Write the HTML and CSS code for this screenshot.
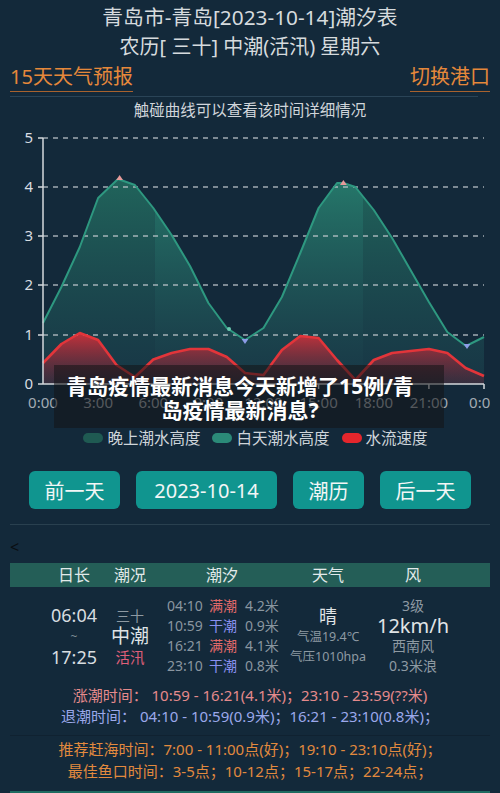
FILE: index.html
```html
<!DOCTYPE html>
<html lang="zh-CN">
<head>
  <meta charset="UTF-8">
  <meta name="viewport" content="width=device-width, initial-scale=1.0">
  <title>青岛潮汐表</title>
  <link rel="stylesheet" href="styles.css">
</head>
<body>
  <div class="title">
    <div class="title-main">青岛市-青岛[2023-10-14]潮汐表</div>
    <div>农历[ 三十] 中潮(活汛) 星期六</div>
  </div>

  <div class="nav">
    <a class="nav-link">15天天气预报</a>
    <a class="nav-link">切换港口</a>
  </div>
  <div class="rule"></div>

  <div class="hint">触碰曲线可以查看该时间详细情况</div>

  <div class="chart">
    <svg class="chart-svg" width="480" height="300" viewBox="10 121 480 300">
      <defs>
        <linearGradient id="gDay" x1="0" y1="178" x2="0" y2="384" gradientUnits="userSpaceOnUse">
          <stop offset="0" stop-color="#2a8c76" stop-opacity="0.8"/>
          <stop offset="1" stop-color="#1e4652" stop-opacity="0.5"/>
        </linearGradient>
        <linearGradient id="gNight" x1="0" y1="178" x2="0" y2="384" gradientUnits="userSpaceOnUse">
          <stop offset="0" stop-color="#257866" stop-opacity="0.75"/>
          <stop offset="1" stop-color="#1c4350" stop-opacity="0.5"/>
        </linearGradient>
        <linearGradient id="gRed" x1="0" y1="333" x2="0" y2="384" gradientUnits="userSpaceOnUse">
          <stop offset="0" stop-color="#d8303a" stop-opacity="0.9"/>
          <stop offset="1" stop-color="#6a2234" stop-opacity="0.35"/>
        </linearGradient>
        <clipPath id="cDay"><rect x="154.5" y="120" width="208.5" height="270"/></clipPath>
        <clipPath id="cNight">
          <rect x="40" y="120" width="114.5" height="270"/>
          <rect x="363" y="120" width="130" height="270"/>
        </clipPath>
      </defs>

      <!-- tide area, day and night -->
      <path clip-path="url(#cNight)" fill="url(#gNight)" d="M43,384 L43,323 L61.4,287 L79.8,247 L98.1,198 L118,179 L134.9,185 L153.3,208 L171.6,235 L190,266 L208.4,303 L226.8,328 L245,340 L263.5,328 L281.9,297 L300.3,253 L318.6,208 L337,183 L343.4,183 L355.4,187 L373.8,210 L392.1,238 L410.5,270 L428.9,302 L447.3,332 L466,346 L484,337 L484,384 Z"/>
      <path clip-path="url(#cDay)" fill="url(#gDay)" d="M43,384 L43,323 L61.4,287 L79.8,247 L98.1,198 L118,179 L134.9,185 L153.3,208 L171.6,235 L190,266 L208.4,303 L226.8,328 L245,340 L263.5,328 L281.9,297 L300.3,253 L318.6,208 L337,183 L343.4,183 L355.4,187 L373.8,210 L392.1,238 L410.5,270 L428.9,302 L447.3,332 L466,346 L484,337 L484,384 Z"/>

      <!-- flow speed area -->
      <path fill="url(#gRed)" d="M43,384 L43,363 L61.4,344 L79.8,333 L98.1,340 L116.5,365 L134.9,377 L153.3,359.5 L171.6,353 L190,349 L208.4,349 L226.8,357 L245.1,373 L263.5,375 L281.9,350 L300.3,336 L318.6,338 L337,360 L355.4,380 L373.8,360 L392.1,353 L410.5,351 L428.9,349 L447.3,353 L465.6,368 L484,376 L484,384 Z"/>

      <!-- grid -->
      <g class="grid">
        <line x1="43" y1="138" x2="484" y2="138"/>
        <line x1="43" y1="187" x2="484" y2="187"/>
        <line x1="43" y1="236" x2="484" y2="236"/>
        <line x1="43" y1="285" x2="484" y2="285"/>
        <line x1="43" y1="335" x2="484" y2="335"/>
      </g>

      <!-- lines -->
      <polyline class="tide-line" points="43,323 61.4,287 79.8,247 98.1,198 118,179 134.9,185 153.3,208 171.6,235 190,266 208.4,303 226.8,328 245,340 263.5,328 281.9,297 300.3,253 318.6,208 337,183 343.4,183 355.4,187 373.8,210 392.1,238 410.5,270 428.9,302 447.3,332 466,346 484,337"/>
      <polyline class="flow-line" points="43,363 61.4,344 79.8,333 98.1,340 116.5,365 134.9,377 153.3,359.5 171.6,353 190,349 208.4,349 226.8,357 245.1,373 263.5,375 281.9,350 300.3,336 318.6,338 337,360 355.4,380 373.8,360 392.1,353 410.5,351 428.9,349 447.3,353 465.6,368 484,376"/>

      <!-- high / low markers -->
      <path class="mark-high" d="M119.6,175 L123,180 L116.2,180 Z"/>
      <path class="mark-high" d="M343.4,180 L346.8,185 L340,185 Z"/>
      <path class="mark-low" d="M245,344 L248.4,339 L241.6,339 Z"/>
      <path class="mark-low" d="M467,349 L470.4,344 L463.6,344 Z"/>
      <circle cx="229" cy="329" r="2" fill="#6cc8b0"/>

      <!-- axes -->
      <g class="axis">
        <line x1="43" y1="138" x2="43" y2="384"/>
        <line x1="43" y1="384" x2="484" y2="384"/>
        <line x1="38" y1="138" x2="43" y2="138"/>
        <line x1="38" y1="187" x2="43" y2="187"/>
        <line x1="38" y1="236" x2="43" y2="236"/>
        <line x1="38" y1="285" x2="43" y2="285"/>
        <line x1="38" y1="335" x2="43" y2="335"/>
        <line x1="38" y1="384" x2="43" y2="384"/>
        <line x1="98.1" y1="384" x2="98.1" y2="389"/>
        <line x1="153.3" y1="384" x2="153.3" y2="389"/>
        <line x1="208.4" y1="384" x2="208.4" y2="389"/>
        <line x1="263.5" y1="384" x2="263.5" y2="389"/>
        <line x1="318.6" y1="384" x2="318.6" y2="389"/>
        <line x1="373.8" y1="384" x2="373.8" y2="389"/>
        <line x1="428.9" y1="384" x2="428.9" y2="389"/>
        <line x1="484" y1="384" x2="484" y2="389"/>
      </g>
      <g class="y-labels">
        <text x="33" y="143">5</text>
        <text x="33" y="192">4</text>
        <text x="33" y="241">3</text>
        <text x="33" y="290">2</text>
        <text x="33" y="340">1</text>
        <text x="33" y="389">0</text>
      </g>
      <g class="x-labels">
        <text x="43" y="408">0:00</text>
        <text x="98.1" y="408">3:00</text>
        <text x="153.3" y="408">6:00</text>
        <text x="208.4" y="408">9:00</text>
        <text x="263.5" y="408">12:00</text>
        <text x="318.6" y="408">15:00</text>
        <text x="373.8" y="408">18:00</text>
        <text x="428.9" y="408">21:00</text>
        <text x="484" y="408">0:00</text>
      </g>
    </svg>

    <div class="news">青岛疫情最新消息今天新增了15例/青<br>岛疫情最新消息?</div>
  </div>

  <div class="legend">
    <span class="legend-item"><i class="dot dot-night"></i>晚上潮水高度</span>
    <span class="legend-item"><i class="dot dot-day"></i>白天潮水高度</span>
    <span class="legend-item"><i class="dot dot-flow"></i>水流速度</span>
  </div>

  <div class="buttons">
    <button class="btn btn-day">前一天</button>
    <button class="btn btn-date">2023-10-14</button>
    <button class="btn btn-cal">潮历</button>
    <button class="btn btn-day">后一天</button>
  </div>
  <div class="divider"></div>

  <div class="back">&lt;</div>

  <div class="table">
    <div class="table-head">
      <div>日长</div>
      <div>潮况</div>
      <div>潮汐</div>
      <div>天气</div>
      <div>风</div>
    </div>
    <div class="table-body">
      <div class="cell sun">
        <div class="big">06:04</div>
        <div class="tilde">~</div>
        <div class="big">17:25</div>
      </div>
      <div class="cell state">
        <div class="muted">三十</div>
        <div class="state-main">中潮</div>
        <div class="state-sub">活汛</div>
      </div>
      <div class="cell tides">
        <div class="tide-row"><span>04:10</span><span class="high">满潮</span><span>4.2米</span></div>
        <div class="tide-row"><span>10:59</span><span class="low">干潮</span><span>0.9米</span></div>
        <div class="tide-row"><span>16:21</span><span class="high">满潮</span><span>4.1米</span></div>
        <div class="tide-row"><span>23:10</span><span class="low">干潮</span><span>0.8米</span></div>
      </div>
      <div class="cell weather">
        <div class="weather-main">晴</div>
        <div class="small">气温19.4℃</div>
        <div class="small">气压1010hpa</div>
      </div>
      <div class="cell wind">
        <div class="muted">3级</div>
        <div class="wind-speed">12km/h</div>
        <div class="muted">西南风</div>
        <div class="muted">0.3米浪</div>
      </div>
    </div>
  </div>

  <div class="times">
    <div class="rise">涨潮时间：&nbsp;10:59 - 16:21(4.1米)；23:10 - 23:59(??米)</div>
    <div class="fall">退潮时间：&nbsp;04:10 - 10:59(0.9米)；16:21 - 23:10(0.8米)；</div>
  </div>
  <div class="sep"></div>
  <div class="tips">
    <div>推荐赶海时间：7:00 - 11:00点(好)；19:10 - 23:10点(好)；</div>
    <div>最佳鱼口时间：3-5点；10-12点；15-17点；22-24点；</div>
  </div>
  <div class="bottom-bar"></div>
</body>
</html>
```

FILE: styles.css
```css
body {
  margin: 0;
  background-color: #13293a;
  color: #d5dadd;
  font-family: "Noto Sans", "Noto Sans CJK SC", sans-serif;
  overflow: hidden;
}
.title {
  padding-top: 2px;
  font-size: 20px;
  line-height: 30px;
  text-align: center;
  color: #d6dbde;
}
.title-main {
  font-size: 20.8px;
}
.nav {
  display: flex;
  justify-content: space-between;
  margin: 1px 10px 0;
}
.nav-link {
  font-size: 20px;
  line-height: 28px;
  color: #e5883a;
  border-bottom: 1px solid #a8622e;
}
.rule {
  margin: 4px 22px 0 10px;
  height: 1px;
  background-color: #2a4457;
}
.hint {
  margin-top: 2px;
  font-size: 15.5px;
  line-height: 22px;
  text-align: center;
  color: #d0d5da;
}
.chart {
  position: relative;
  margin-left: 10px;
  width: 480px;
  height: 300px;
}
.chart-svg {
  display: block;
}
.grid line {
  stroke: #c4cad0;
  stroke-opacity: 0.8;
  stroke-width: 1.3;
  stroke-dasharray: 5 5;
}
.tide-line {
  fill: none;
  stroke: #2e9880;
  stroke-width: 2;
  stroke-linejoin: round;
}
.flow-line {
  fill: none;
  stroke: #e2353a;
  stroke-width: 2.6;
  stroke-linejoin: round;
}
.mark-high {
  fill: #e79a9a;
}
.mark-low {
  fill: #8c9ce6;
}
.axis line {
  stroke: #d4d8dc;
  stroke-width: 1.5;
}
.y-labels text {
  font-size: 15px;
  fill: #d8dde2;
  text-anchor: end;
}
.x-labels text {
  font-size: 15px;
  fill: #a2abb3;
  text-anchor: middle;
}
.news {
  position: absolute;
  left: 44px;
  top: 244px;
  width: 372px;
  height: 54px;
  padding: 9px 18px 0 0;
  background-color: rgba(20, 20, 22, 0.55);
  color: #ffffff;
  font-size: 21px;
  font-weight: 700;
  line-height: 24px;
  text-align: center;
}
.legend {
  display: flex;
  justify-content: center;
  gap: 12px;
  margin-top: 7px;
  padding-left: 11px;
  font-size: 15.5px;
  line-height: 20px;
  color: #cfd5da;
}
.legend-item {
  display: flex;
  align-items: center;
  gap: 4px;
}
.dot {
  display: inline-block;
  width: 20px;
  height: 10px;
  border-radius: 5px;
}
.dot-night {
  background-color: #1f5a52;
}
.dot-day {
  background-color: #2b8a78;
}
.dot-flow {
  background-color: #e5262c;
}
.buttons {
  display: flex;
  justify-content: center;
  gap: 16px;
  margin-top: 23px;
}
.btn {
  height: 38px;
  padding: 0;
  border: none;
  border-radius: 6px;
  background-color: #10958f;
  color: #f2f6f6;
  font-family: "Noto Sans", "Noto Sans CJK SC", sans-serif;
  font-size: 20px;
}
.btn-day {
  width: 91px;
}
.btn-date {
  width: 141px;
}
.btn-cal {
  width: 71px;
}
.divider {
  margin: 15px 10px 0;
  height: 1px;
  background-color: #29404f;
}
.back {
  margin-top: 11px;
  padding-left: 10px;
  font-size: 16px;
  line-height: 22px;
  color: #0a0e12;
}
.table {
  margin: 5px 10px 0;
}
.table-head,
.table-body {
  display: grid;
  grid-template-columns: 56px 56px 128px 84px 86px;
  padding-left: 36px;
}
.table-head {
  height: 24px;
  line-height: 24px;
  background-color: #245e57;
  font-size: 16px;
  color: #e2eaea;
  text-align: center;
}
.table-body {
  padding-top: 9px;
  padding-bottom: 7px;
  height: 80px;
}
.cell {
  display: flex;
  flex-direction: column;
  justify-content: center;
  align-items: center;
}
.big {
  font-size: 18px;
  line-height: 21px;
  color: #d8dde0;
}
.tilde {
  font-size: 12px;
  line-height: 21px;
  color: #7f8c96;
}
.muted {
  font-size: 14px;
  line-height: 21px;
  color: #8e9aa3;
}
.state-main {
  font-size: 19px;
  line-height: 21px;
  color: #dfe3e6;
}
.state-sub {
  font-size: 14.5px;
  line-height: 21px;
  color: #e0607a;
}
.tides {
  align-items: stretch;
}
.tide-row {
  display: grid;
  grid-template-columns: 42px 36px 1fr;
  padding-left: 9px;
  font-size: 14px;
  line-height: 20px;
  color: #8a96a0;
}
.high {
  color: #e26a6a;
}
.low {
  color: #8a90f0;
}
.weather-main {
  font-size: 18px;
  line-height: 22px;
  color: #e0e4e6;
}
.small {
  font-size: 12.5px;
  line-height: 20.5px;
  color: #8e9aa3;
}
.wind .muted {
  line-height: 20px;
}
.wind-speed {
  font-size: 20px;
  line-height: 20px;
  color: #e0e4e6;
}
.times {
  margin-top: 2px;
  font-size: 15px;
  line-height: 21px;
  text-align: center;
}
.rise {
  color: #e58a8c;
}
.fall {
  color: #9ba8ea;
}
.sep {
  margin: 8px 10px 0;
  height: 1px;
  background-color: rgba(0, 0, 0, 0.15);
}
.tips {
  margin-top: 2px;
  font-size: 15px;
  line-height: 22px;
  text-align: center;
  color: #e28a3e;
}
.bottom-bar {
  margin: 9px 10px 0;
  height: 4px;
  background-color: #1f6a60;
}
```
